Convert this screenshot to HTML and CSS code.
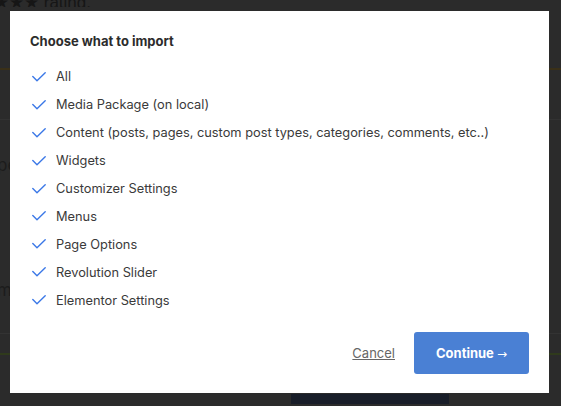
FILE: index.html
```html
<!DOCTYPE html>
<html>
<head>
<meta charset="utf-8">
<link rel="stylesheet" href="styles.css">
</head>
<body>
<div class="page">
  <div class="rating">★★★ rating.</div>
  <div class="rule rule-brown"></div>
  <div class="rule rule-gray"></div>
  <div class="frag frag-pe">pe</div>
  <div class="frag frag-m">m</div>
  <div class="rule rule-gray2"></div>
  <div class="rule rule-olive"></div>
  <div class="bottom-row"><div class="navy"></div></div>
</div>

<div class="modal">
  <h2 class="title">Choose what to import</h2>
  <ul class="options">
    <li><svg class="check" viewBox="0 0 14 10" width="14" height="10"><path d="M0.8 4.6 L5 8.8 L13.2 0.8"/></svg><span>All</span></li>
    <li><svg class="check" viewBox="0 0 14 10" width="14" height="10"><path d="M0.8 4.6 L5 8.8 L13.2 0.8"/></svg><span>Media Package (on local)</span></li>
    <li><svg class="check" viewBox="0 0 14 10" width="14" height="10"><path d="M0.8 4.6 L5 8.8 L13.2 0.8"/></svg><span>Content (posts, pages, custom post types, categories, comments, etc..)</span></li>
    <li><svg class="check" viewBox="0 0 14 10" width="14" height="10"><path d="M0.8 4.6 L5 8.8 L13.2 0.8"/></svg><span>Widgets</span></li>
    <li><svg class="check" viewBox="0 0 14 10" width="14" height="10"><path d="M0.8 4.6 L5 8.8 L13.2 0.8"/></svg><span>Customizer Settings</span></li>
    <li><svg class="check" viewBox="0 0 14 10" width="14" height="10"><path d="M0.8 4.6 L5 8.8 L13.2 0.8"/></svg><span>Menus</span></li>
    <li><svg class="check" viewBox="0 0 14 10" width="14" height="10"><path d="M0.8 4.6 L5 8.8 L13.2 0.8"/></svg><span>Page Options</span></li>
    <li><svg class="check" viewBox="0 0 14 10" width="14" height="10"><path d="M0.8 4.6 L5 8.8 L13.2 0.8"/></svg><span>Revolution Slider</span></li>
    <li><svg class="check" viewBox="0 0 14 10" width="14" height="10"><path d="M0.8 4.6 L5 8.8 L13.2 0.8"/></svg><span>Elementor Settings</span></li>
  </ul>
  <div class="actions">
    <a class="cancel" href="#">Cancel</a>
    <button class="continue">Continue <span class="arrow">→</span></button>
  </div>
</div>
</body>
</html>
```

FILE: styles.css
```css
* { box-sizing: border-box; }
html, body {
  margin: 0;
  padding: 0;
  width: 561px;
  height: 406px;
  overflow: hidden;
  background: #2b2b2b;
  font-family: "Inter", "Liberation Sans", Arial, sans-serif;
}
.page {
  width: 561px;
  height: 406px;
  display: flex;
  flex-direction: column;
  color: #141414;
}
.rating {
  font-family: "Liberation Sans", Arial, sans-serif;
  font-size: 17px;
  line-height: 14px;
  height: 11px;
  overflow: hidden;
  margin-top: -4px;
  margin-left: -6px;
  color: #161616;
  white-space: nowrap;
}
.rule { height: 1px; width: 100%; flex: none; }
.rule-brown { margin-top: 61px; height: 2px; background: #3a3018; }
.rule-gray { margin-top: 49px; background: #323232; }
.frag { font-size: 17px; line-height: 20px; color: #1c1c1c; margin-left: -3px; white-space: nowrap; }
.frag-pe { margin-top: 35px; }
.frag-m { margin-top: 105px; }
.rule-gray2 { margin-top: 33px; background: #333333; }
.rule-olive { margin-top: 19px; height: 2px; background: #2f3a1c; }
.bottom-row { margin-top: 39px; height: 10px; flex: none; }
.navy { margin-left: 291px; width: 158px; height: 10px; background: #191e29; }

.modal {
  position: fixed;
  left: 10px;
  top: 11px;
  width: 539px;
  height: 382px;
  background: #ffffff;
  padding: 22px 20px 19px 20px;
  display: flex;
  flex-direction: column;
}
.title {
  margin: 0;
  font-size: 13px;
  line-height: 16px;
  font-weight: 700;
  color: #2c2c2c;
}
.options {
  list-style: none;
  margin: 14px 0 0 0;
  padding: 0;
}
.options li {
  height: 27.9px;
  display: flex;
  align-items: center;
  font-size: 12.8px;
  color: #3a3a3a;
}
.check {
  margin-left: 2px;
  margin-right: 10px;
  fill: none;
  stroke: #3b78e7;
  stroke-width: 1.4;
  stroke-linecap: round;
  stroke-linejoin: round;
}
.actions {
  margin-top: auto;
  display: flex;
  align-items: center;
  justify-content: flex-end;
  gap: 19px;
}
.cancel {
  font-size: 13px;
  color: #666666;
  text-decoration: underline;
}
.continue {
  width: 115px;
  height: 42px;
  border: none;
  border-radius: 3px;
  background: #4a80d4;
  color: #ffffff;
  font-family: "Inter", "Liberation Sans", Arial, sans-serif;
  font-size: 13px;
  font-weight: 700;
  padding: 0;
}
.arrow {
  font-family: "DejaVu Sans", sans-serif;
  font-weight: 400;
  font-size: 12px;
}
```
